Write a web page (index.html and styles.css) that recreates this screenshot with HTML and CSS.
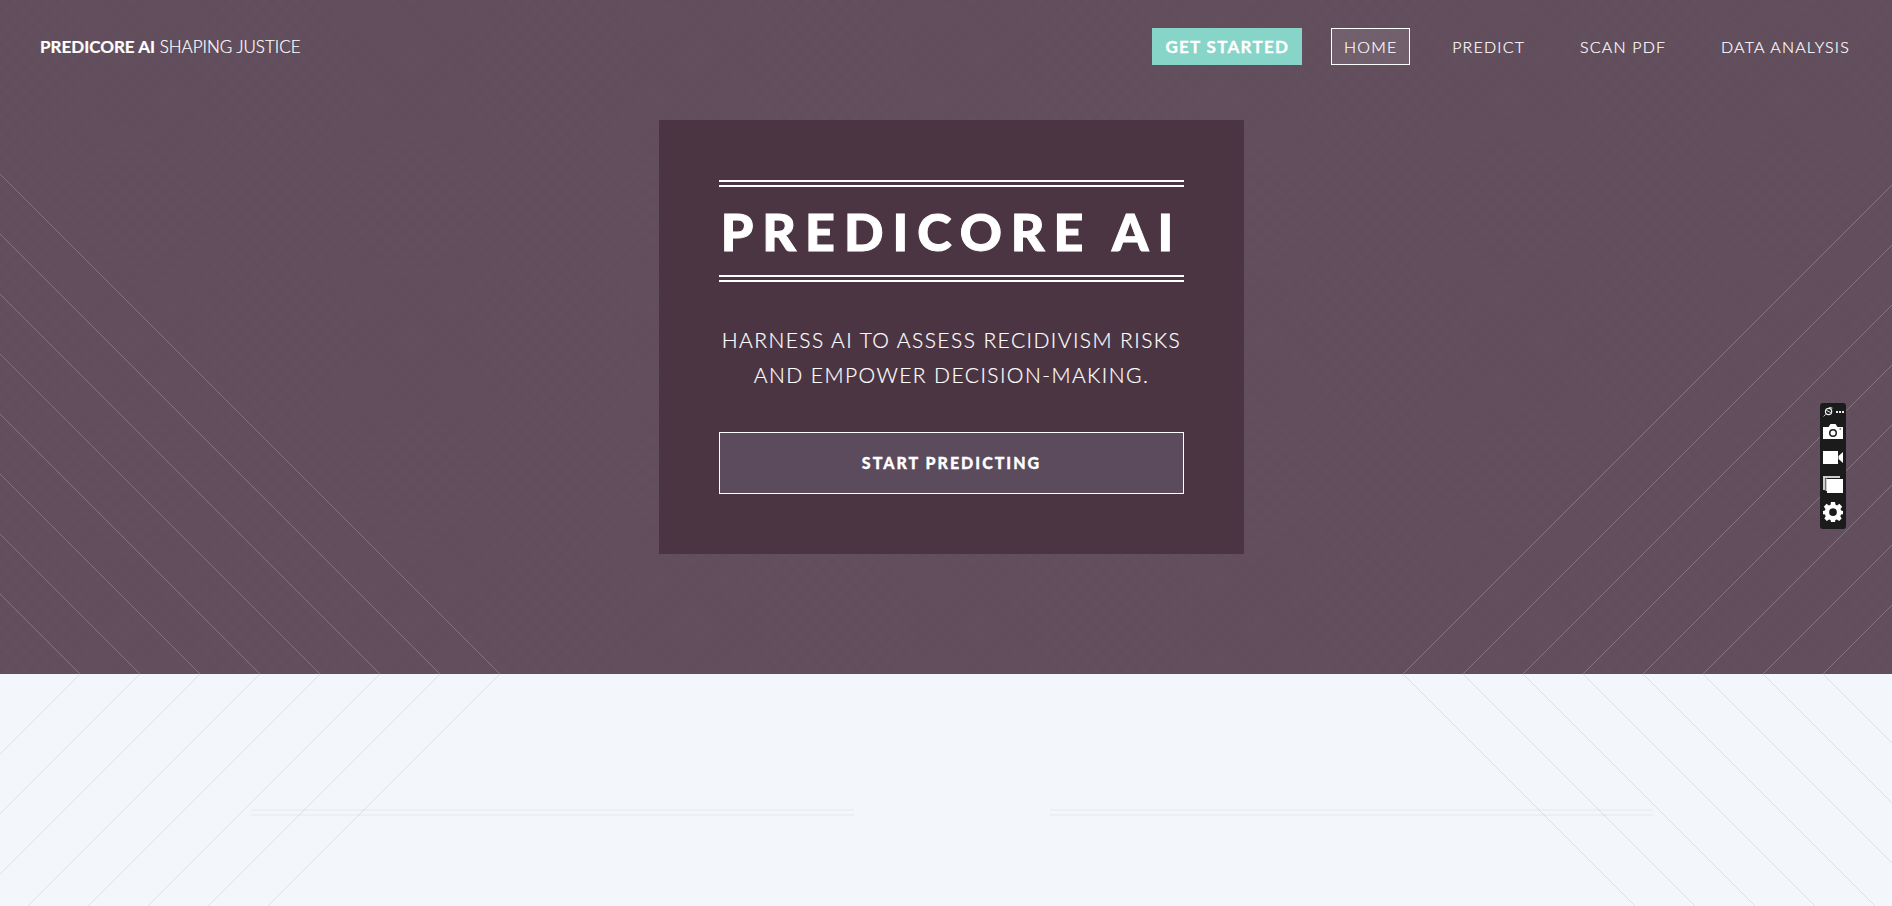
FILE: index.html
```html
<!DOCTYPE html>
<html lang="en">
<head>
    <meta charset="UTF-8">
    <meta name="viewport" content="width=device-width, initial-scale=1.0">
    <title>Predicore AI</title>
    <link rel="stylesheet" href="styles.css">
</head>
<body>
    <div class="page">
        <!-- diagonal lines behind both sections -->
        <svg class="lines" width="1903" height="906" viewBox="0 0 1903 906" aria-hidden="true">
            <path class="lines-hero" d="M500 674L0 174M440 674L0 234M380 674L0 294M320 674L0 354M260 674L0 414M200 674L0 474M140 674L0 534M80 674L0 594M1403 674L1903 174M1463 674L1903 234M1523 674L1903 294M1583 674L1903 354M1643 674L1903 414M1703 674L1903 474M1763 674L1903 534M1823 674L1903 594"/>
            <path class="lines-below" d="M500 674L268 906M440 674L208 906M380 674L148 906M320 674L88 906M260 674L28 906M200 674L0 874M140 674L0 814M80 674L0 754M1403 674L1635 906M1463 674L1695 906M1523 674L1755 906M1583 674L1815 906M1643 674L1875 906M1703 674L1903 874M1763 674L1903 814M1823 674L1903 754"/>
        </svg>

        <section class="hero">
            <header class="topbar">
                <a class="logo" href="#"><strong>PREDICORE AI</strong> SHAPING JUSTICE</a>
                <nav class="nav">
                    <a class="nav-cta" href="#">GET STARTED</a>
                    <a class="nav-link active" href="#">HOME</a>
                    <a class="nav-link" href="#">PREDICT</a>
                    <a class="nav-link" href="#">SCAN PDF</a>
                    <a class="nav-link" href="#">DATA ANALYSIS</a>
                </nav>
            </header>

            <div class="hero-box">
                <h1 class="hero-title">PREDICORE AI</h1>
                <p class="hero-text">HARNESS AI TO ASSESS RECIDIVISM RISKS AND EMPOWER DECISION-MAKING.</p>
                <a class="hero-button" href="#">START PREDICTING</a>
            </div>
        </section>

        <section class="below">
            <div class="section-heading">
                <span class="heading-rule"></span>
                <span class="heading-rule"></span>
            </div>
        </section>

        <!-- capture toolbar -->
        <div class="toolbar">
            <div class="toolbar-top">
                <svg width="10" height="10" viewBox="0 0 9 9"><path d="M0.5 8.5L2.5 6.5" fill="none" stroke="#ddd" stroke-width="0.8"/><circle cx="5" cy="4" r="2.8" fill="none" stroke="#eee" stroke-width="1.1"/><path d="M3 3L7 5M5.5 0.5L8.5 1" fill="none" stroke="#eee" stroke-width="0.9"/></svg>
                <span class="toolbar-dots"><i></i><i></i><i></i></span>
            </div>
            <svg class="toolbar-icon" width="20" height="17" viewBox="0 0 20 17"><path fill="#fff" fill-rule="evenodd" d="M0 4H5.5L7.5 1H12.5L14.5 4H20V16H0ZM10 6A4 4 0 1 0 10 14A4 4 0 1 0 10 6ZM10 7.5A2.5 2.5 0 1 1 10 12.5A2.5 2.5 0 1 1 10 7.5ZM16.5 5.5H18V6.5H16.5Z"/></svg>
            <svg class="toolbar-icon" width="20" height="17" viewBox="0 0 20 17"><path fill="#fff" d="M0 2H15V15H0ZM15.5 7L20 3V14L15.5 10Z"/></svg>
            <svg class="toolbar-icon" width="20" height="18" viewBox="0 0 20 18"><path fill="#ccc" d="M0 1H17V3H2V15H0Z"/><path fill="#ccc" d="M2.5 3.5H4V16H2.5Z"/><path fill="#fff" d="M4 4H20V18H4Z"/></svg>
            <svg class="toolbar-icon" width="20" height="20" viewBox="0 0 24 24"><path fill="#fff" fill-rule="evenodd" d="M9.6 0H14.4L15 3.4L16.9 4.2L19.7 2.2L23 5.6L21 8.4L21.8 10.3L24 10.8V14.6L21.6 15.1L20.8 17L22.4 19.8L19.4 22.8L16.6 21L14.9 21.7L14.4 24H9.6L9.1 21.7L7.4 21L4.6 22.8L1.6 19.8L3.2 17L2.4 15.1L0 14.6V10.8L2.2 10.3L3 8.4L1 5.6L4.3 2.2L7.1 4.2L9 3.4ZM12 7.6A4.6 4.6 0 1 0 12 16.8A4.6 4.6 0 1 0 12 7.6Z"/></svg>
        </div>
    </div>
</body>
</html>
```

FILE: styles.css
```css
html, body {
    margin: 0;
    padding: 0;
    height: 100%;
    overflow: hidden;
    background-color: #f3f6fb;
}
body {
    font-family: Lato, "Open Sans", sans-serif;
    color: #fff;
}
a {
    color: inherit;
    text-decoration: none;
}
.page {
    position: relative;
    width: 1903px;
    height: 906px;
    overflow: hidden;
}
.lines {
    position: absolute;
    top: 0;
    left: 0;
    z-index: 1;
    pointer-events: none;
}
.lines path {
    fill: none;
    stroke-width: 1;
}
.lines-hero {
    stroke: rgba(255, 255, 255, 0.22);
}
.lines-below {
    stroke: rgba(60, 60, 80, 0.12);
}

/* hero */
.hero {
    height: 674px;
    box-sizing: border-box;
    background-color: #624e5c;
    background-image:
        repeating-linear-gradient(45deg, rgba(0, 0, 0, 0.02) 0 1px, transparent 1px 2px),
        repeating-linear-gradient(-45deg, rgba(255, 255, 255, 0.012) 0 1px, transparent 1px 2px);
}
.topbar {
    display: flex;
    justify-content: space-between;
    align-items: center;
    padding: 28px 40px 0;
    height: 37px;
    position: relative;
    z-index: 2;
}
.logo {
    font-size: 17px;
    font-weight: 300;
    -webkit-text-stroke: 0.2px #fff;
}
.logo strong {
    font-weight: 700;
}
.nav {
    display: flex;
    align-items: center;
    gap: 28.75px;
}
.nav-cta {
    padding: 0 13px;
    line-height: 37px;
    background-color: #87d5c8;
    font-size: 17px;
    font-weight: 700;
    letter-spacing: 1.3px;
    -webkit-text-stroke: 0.3px #fff;
}
.nav-link {
    padding: 0 12px;
    line-height: 35px;
    border: 1px solid transparent;
    font-size: 16px;
    font-weight: 300;
    letter-spacing: 1.2px;
    -webkit-text-stroke: 0.2px #fff;
}
.nav-link.active {
    border-color: #fff;
    background-color: rgba(255, 255, 255, 0.1);
}
.hero-box {
    position: relative;
    z-index: 2;
    width: 585px;
    height: 434px;
    box-sizing: border-box;
    margin: 55px auto 0;
    padding: 60px;
    background-color: #4b3543;
}
.hero-title {
    margin: 0;
    height: 88px;
    line-height: 88px;
    border-top: 7px double #fff;
    border-bottom: 7px double #fff;
    text-align: center;
    font-size: 52px;
    font-weight: 900;
    letter-spacing: 9px;
    white-space: nowrap;
    -webkit-text-stroke: 1px #fff;
}
.hero-text {
    margin: 40px 0 0;
    line-height: 35px;
    text-align: center;
    font-size: 21px;
    font-weight: 300;
    letter-spacing: 1.43px;
    -webkit-text-stroke: 0.2px #fff;
}
.hero-button {
    display: block;
    margin-top: 40px;
    line-height: 60px;
    border: 1px solid #fff;
    background-color: #5b4b5c;
    text-align: center;
    font-size: 16px;
    font-weight: 900;
    letter-spacing: 2px;
    -webkit-text-stroke: 0.3px #fff;
}

/* section below the hero */
.below {
    height: 232px;
    box-sizing: border-box;
    padding-top: 135px;
}
.section-heading {
    display: flex;
    justify-content: center;
    gap: 196px;
}
.heading-rule {
    width: 603px;
    height: 7px;
    border-top: 7px double #eceff4;
}

/* capture toolbar */
.toolbar {
    position: absolute;
    z-index: 3;
    top: 403px;
    left: 1820px;
    width: 26px;
    height: 126px;
    box-sizing: border-box;
    padding-top: 4px;
    display: flex;
    flex-direction: column;
    align-items: center;
    gap: 9px;
    background-color: #1b1b1b;
    border-radius: 3px;
}
.toolbar-top {
    display: flex;
    align-items: center;
    gap: 3px;
    height: 10px;
    margin-bottom: -3px;
}
.toolbar-dots {
    display: flex;
    gap: 1px;
}
.toolbar-dots i {
    width: 2px;
    height: 2px;
    background-color: #eee;
}
.toolbar-icon {
    flex: none;
}
```
